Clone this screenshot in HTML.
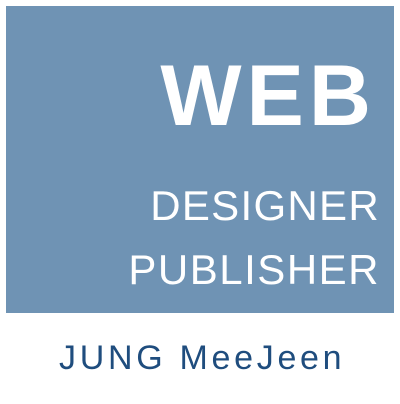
<!DOCTYPE html>
<html><head><style>
html,body{margin:0;padding:0;background:#fff;width:400px;height:404px;overflow:hidden;font-family:"Liberation Sans",sans-serif}
.box{position:absolute;left:6px;top:6px;width:388px;height:307px;background:#6f93b4}
.t{position:absolute;color:#fff;white-space:nowrap;line-height:1}
#web{font-weight:bold;font-size:86px;letter-spacing:5px;right:24px;top:53px}
#d{font-size:42px;letter-spacing:1.3px;right:20px;top:185px}
#p{font-size:42px;letter-spacing:1.5px;right:20px;top:249px}
#n{position:absolute;left:59px;top:341px;font-size:34px;letter-spacing:3.7px;color:#1f4d7e;white-space:nowrap;line-height:1}
</style></head><body>
<div class="box"></div>
<div class="t" id="web">WEB</div>
<div class="t" id="d">DESIGNER</div>
<div class="t" id="p">PUBLISHER</div>
<div id="n">JUNG MeeJeen</div>
</body></html>
